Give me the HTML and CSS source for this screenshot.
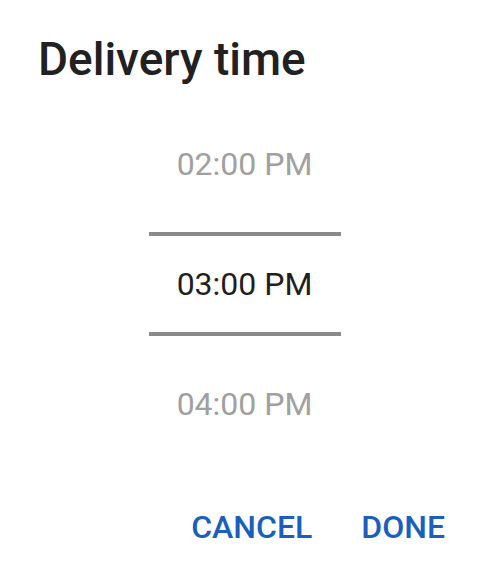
FILE: index.html
```html
<!DOCTYPE html>
<html>
<head>
<meta charset="utf-8">
<link rel="stylesheet" href="styles.css">
</head>
<body>
<div class="dialog">
  <h1 class="title">Delivery time</h1>
  <div class="picker">
    <div class="item dim">02:00 PM</div>
    <div class="rule"></div>
    <div class="item selected">03:00 PM</div>
    <div class="rule"></div>
    <div class="item dim">04:00 PM</div>
  </div>
  <div class="actions">
    <button class="btn">CANCEL</button>
    <button class="btn">DONE</button>
  </div>
</div>
</body>
</html>
```
FILE: styles.css
```css
html, body {
  margin: 0;
  padding: 0;
  background: #ffffff;
}
.dialog {
  width: 489px;
  height: 584px;
  font-family: Roboto, "Noto Sans", sans-serif;
  display: flex;
  flex-direction: column;
}
.title {
  margin: 0;
  padding: 33px 0 0 38px;
  height: 104px;
  box-sizing: border-box;
  font-size: 46px;
  line-height: 52px;
  font-weight: 500;
  color: #212121;
}
.picker {
  width: 192px;
  margin: 0 auto;
  display: flex;
  flex-direction: column;
  gap: 8px;
}
.item {
  height: 120px;
  display: flex;
  align-items: center;
  justify-content: center;
  font-size: 32px;
  color: #a0a0a0;
}
.item.selected {
  height: 80px;
  color: #1f1f1f;
}
.rule {
  height: 4px;
  background: #8a8a8a;
}
.actions {
  display: flex;
  justify-content: flex-end;
  gap: 49px;
  padding: 45px 44px 0 0;
}
.btn {
  border: 0;
  background: none;
  padding: 0;
  font-family: Roboto, sans-serif;
  font-weight: 500;
  font-size: 32px;
  line-height: 36px;
  color: #1a5fbe;
}
```
